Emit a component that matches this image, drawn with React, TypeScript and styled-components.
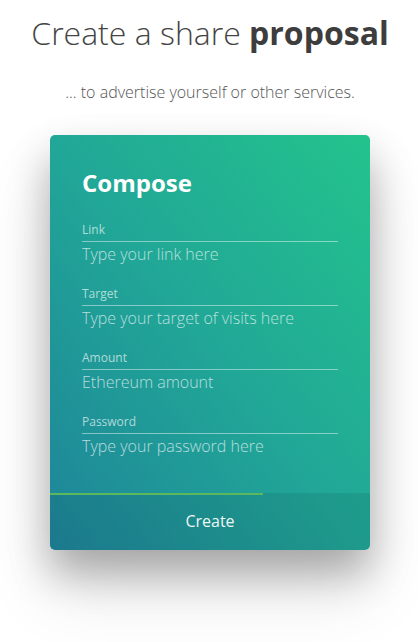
import React from "react";
import styled, { createGlobalStyle } from "styled-components";

const Global = createGlobalStyle`
  html, body { margin: 0; padding: 0; background: #ffffff; }
  body { font-family: "Open Sans", "Noto Sans", sans-serif; }
  * { box-sizing: border-box; }
`;

const Page = styled.main`
  display: flex;
  flex-direction: column;
  align-items: center;
  padding: 11px 0 120px 2px;
`;

const Title = styled.h1`
  margin: 0;
  font-size: 32px;
  line-height: 44px;
  font-weight: 300;
  color: #444444;
  white-space: nowrap;
  strong { font-weight: 700; color: #3d3d3d; }
`;

const Subtitle = styled.p`
  margin: 27px 0 0;
  font-size: 16px;
  line-height: 20px;
  font-weight: 300;
  color: #555555;
`;

const Card = styled.section`
  margin-top: 33px;
  width: 320px;
  border-radius: 5px;
  overflow: hidden;
  background: linear-gradient(to top right, #1e8499 0%, #21a797 50%, #23c38c 100%);
  box-shadow: 0 22px 40px rgba(0, 0, 0, 0.28), 0 40px 70px rgba(0, 0, 0, 0.12);
  color: #fff;
`;

const Form = styled.div`
  padding: 32px 32px 35px;
  display: flex;
  flex-direction: column;
  gap: 20px;
`;

const Heading = styled.h2`
  margin: 0 0 3px;
  font-size: 24px;
  line-height: 32px;
  font-weight: 700;
  color: #ffffff;
`;

const Field = styled.label`
  display: flex;
  flex-direction: column;
`;

const Label = styled.span`
  font-size: 12px;
  line-height: 16px;
  font-weight: 400;
  color: rgba(255, 255, 255, 0.65);
  padding-bottom: 3px;
  border-bottom: 1px solid rgba(255, 255, 255, 0.45);
`;

const Input = styled.input`
  border: none;
  outline: none;
  background: transparent;
  padding: 0;
  margin: 0;
  height: 24px;
  font-family: "Open Sans", "Noto Sans", sans-serif;
  font-size: 16px;
  line-height: 24px;
  font-weight: 300;
  color: #fff;
  &::placeholder { color: rgba(255, 255, 255, 0.68); }
`;

const Footer = styled.div`
  background: rgba(0, 0, 0, 0.08);
`;

const Progress = styled.div`
  height: 2px;
  background: #5cb85c;
`;

const Button = styled.button`
  width: 100%;
  height: 55px;
  border: none;
  background: transparent;
  font-family: "Open Sans", "Noto Sans", sans-serif;
  font-size: 16px;
  font-weight: 400;
  color: rgba(255, 255, 255, 0.95);
  padding: 0 0 4px;
  cursor: pointer;
`;

const fields = [
  { label: "Link", placeholder: "Type your link here", type: "text" },
  { label: "Target", placeholder: "Type your target of visits here", type: "text" },
  { label: "Amount", placeholder: "Ethereum amount", type: "text" },
  { label: "Password", placeholder: "Type your password here", type: "password" },
];

export default function App() {
  const progress = 213 / 320;
  return (
    <>
      <Global />
      <Page>
        <Title>
          Create a share <strong>proposal</strong>
        </Title>
        <Subtitle>... to advertise yourself or other services.</Subtitle>
        <Card>
          <Form>
            <Heading>Compose</Heading>
            {fields.map((f) => (
              <Field key={f.label}>
                <Label>{f.label}</Label>
                <Input type={f.type} placeholder={f.placeholder} />
              </Field>
            ))}
          </Form>
          <Footer>
            <Progress style={{ width: `${progress * 100}%` }} />
            <Button>Create</Button>
          </Footer>
        </Card>
      </Page>
    </>
  );
}
